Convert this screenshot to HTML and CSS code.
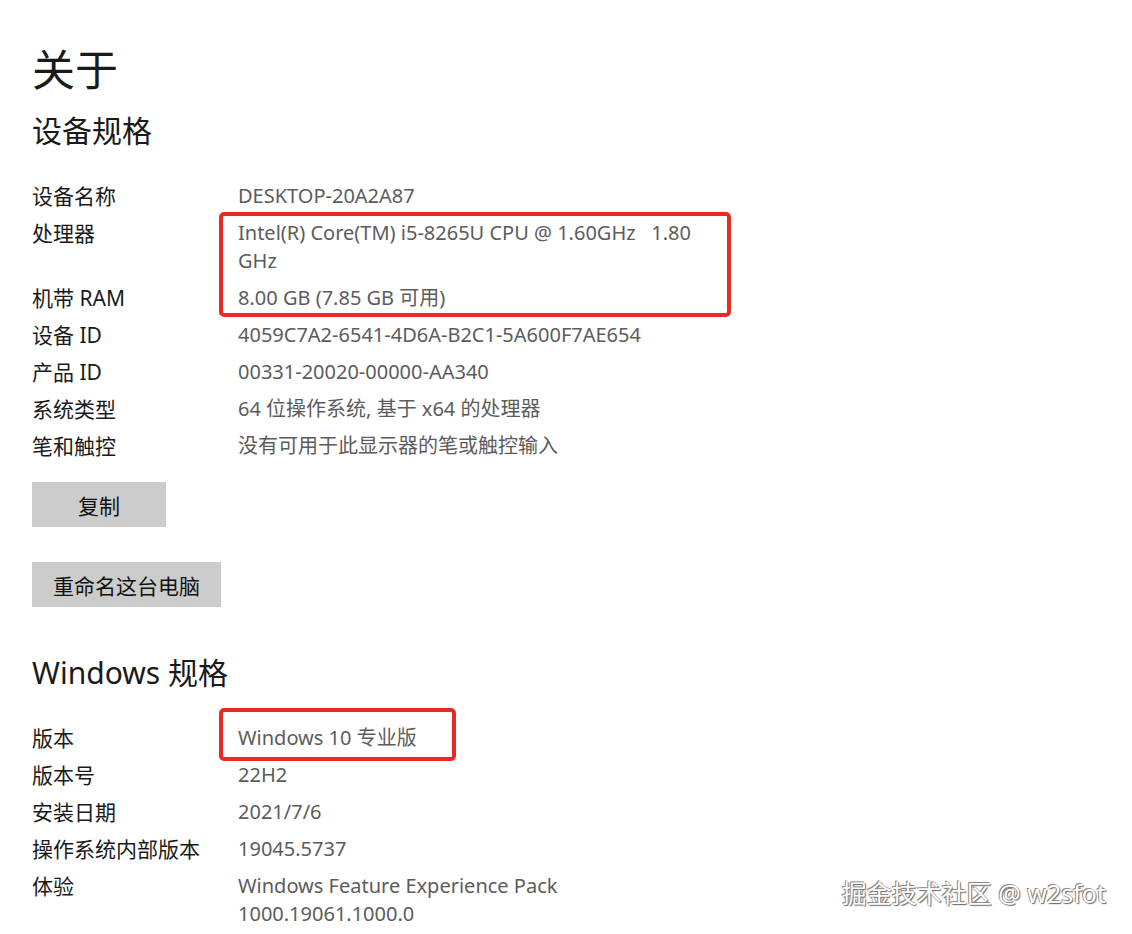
FILE: index.html
```html
<!DOCTYPE html>
<html lang="zh-CN">
<head>
	<meta charset="UTF-8">
	<meta name="viewport" content="width=device-width, initial-scale=1.0">
	<link rel="stylesheet" href="styles.css">
	<title>关于</title>
</head>
<body>
	<main class="page">
		<h1 class="title">关于</h1>

		<h2 class="section-title">设备规格</h2>
		<dl class="specs">
			<dt>设备名称</dt>
			<dd>DESKTOP-20A2A87</dd>
			<dt>处理器</dt>
			<dd>Intel(R) Core(TM) i5-8265U CPU @ 1.60GHz&nbsp;&nbsp; 1.80 GHz</dd>
			<dt>机带 RAM</dt>
			<dd>8.00 GB (7.85 GB 可用)</dd>
			<dt>设备 ID</dt>
			<dd>4059C7A2-6541-4D6A-B2C1-5A600F7AE654</dd>
			<dt>产品 ID</dt>
			<dd>00331-20020-00000-AA340</dd>
			<dt>系统类型</dt>
			<dd>64 位操作系统, 基于 x64 的处理器</dd>
			<dt>笔和触控</dt>
			<dd>没有可用于此显示器的笔或触控输入</dd>
		</dl>

		<div class="actions">
			<button class="btn btn-copy">复制</button>
			<button class="btn">重命名这台电脑</button>
		</div>

		<h2 class="section-title section-windows">Windows 规格</h2>
		<dl class="specs">
			<dt>版本</dt>
			<dd>Windows 10 专业版</dd>
			<dt>版本号</dt>
			<dd>22H2</dd>
			<dt>安装日期</dt>
			<dd>2021/7/6</dd>
			<dt>操作系统内部版本</dt>
			<dd>19045.5737</dd>
			<dt>体验</dt>
			<dd>Windows Feature Experience Pack 1000.19061.1000.0</dd>
		</dl>

		<div class="mark mark-cpu"></div>
		<div class="mark mark-edition"></div>
		<div class="watermark">掘金技术社区 @ w2sfot</div>
	</main>
</body>
</html>
```

FILE: styles.css
```css
* {
	box-sizing: border-box;
}

:root {
	--fg: #1a1a1a;
	--fg2: #5c5c5c;
	--btn: #cccccc;
	--mark: #ea2a24;
}

html, body {
	margin: 0;
	background: #fff;
}

body {
	color: var(--fg);
	font-family: "Noto Sans", "Noto Sans CJK SC", sans-serif;
}

.page {
	position: relative;
	width: 1132px;
	height: 934px;
	padding: 42px 0 0 32px;
	overflow: hidden;
}

.title {
	margin: 0;
	font-size: 43px;
	line-height: 56px;
	font-weight: 400;
}

.section-title {
	margin: 13px 0 0;
	font-size: 30px;
	line-height: 40px;
	font-weight: 400;
}
.section-windows {
	margin-top: 46px;
}

.specs {
	display: grid;
	grid-template-columns: 206px 470px;
	row-gap: 9px;
	margin: 31px 0 0;
	font-size: 20px;
	line-height: 28px;
}
.specs dt {
	margin: 0;
	font-size: 21px;
}
.specs dd {
	margin: 0;
	color: var(--fg2);
}

.actions {
	display: flex;
	flex-direction: column;
	align-items: flex-start;
	gap: 35px;
	margin-top: 22px;
}

.btn {
	height: 45px;
	padding: 0 21px;
	font: inherit;
	font-size: 21px;
	color: #111;
	background: var(--btn);
	border: none;
	border-radius: 0;
}
.btn-copy {
	width: 134px;
}

.mark {
	position: absolute;
	border: 4px solid var(--mark);
	border-radius: 5px;
}
.mark-cpu {
	left: 219px;
	top: 212px;
	width: 512px;
	height: 105px;
}
.mark-edition {
	left: 219px;
	top: 708px;
	width: 237px;
	height: 53px;
}

.watermark {
	position: absolute;
	right: 26px;
	top: 876px;
	font-size: 25px;
	line-height: 34px;
	color: #fff;
	text-shadow: -1px -1px 0 #8a8a8a, 1px 1px 1px #6a6a6a, 0 0 2px #9a9a9a;
}
```
